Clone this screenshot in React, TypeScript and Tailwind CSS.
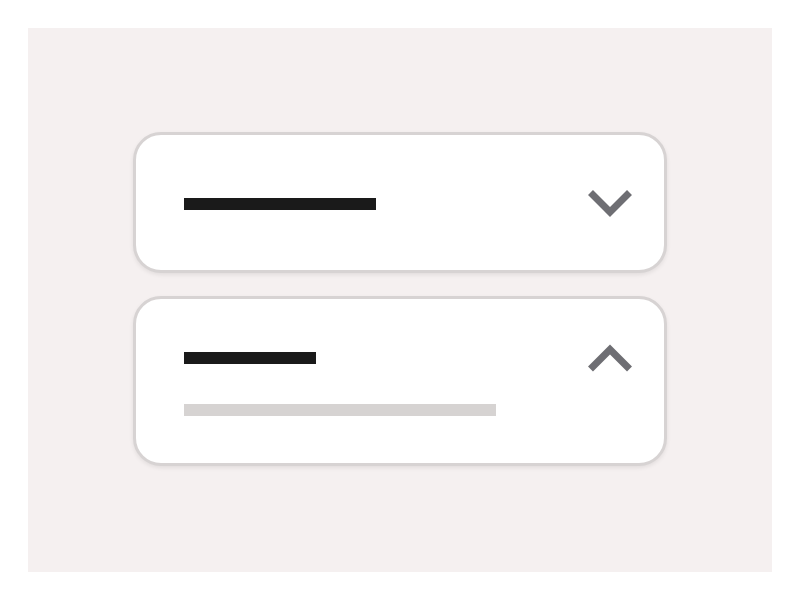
import React from "react";

type ChevronProps = {
  up?: boolean;
};

const Chevron = ({ up }: ChevronProps) => (
  <svg width="44" height="28" viewBox="0 0 44 28" className="shrink-0">
    <polyline
      points={up ? "2.5,25 22,5.5 41.5,25" : "2.5,2.5 22,22 41.5,2.5"}
      fill="none"
      stroke="#6e6e73"
      strokeWidth="7"
      strokeLinecap="butt"
      strokeLinejoin="miter"
    />
  </svg>
);

const cardClass =
  "w-[534px] rounded-[28px] border-[3px] border-[#d7d3d3] bg-white pl-[48px] pr-[32px] shadow-[0_2px_4px_rgba(0,0,0,0.08)]";

export default function App() {
  return (
    <div className="h-[600px] w-[800px] bg-white p-[28px]">
      <div className="flex h-full w-full flex-col items-center justify-center gap-[23px] bg-[#f5f0f0] pb-[2px]">
        {/* collapsed item */}
        <div className={`${cardClass} pt-[55px] pb-[52px]`}>
          <div className="flex h-[28px] items-center justify-between">
            <div className="h-[12px] w-[192px] bg-[#1a1a1a]" />
            <Chevron />
          </div>
        </div>

        {/* expanded item */}
        <div className={`${cardClass} pt-[45px] pb-[47px]`}>
          <div className="flex h-[28px] items-center justify-between">
            <div className="h-[12px] w-[132px] bg-[#1a1a1a]" />
            <Chevron up />
          </div>
          <div className="mt-[32px] h-[12px] w-[312px] bg-[#d6d3d2]" />
        </div>
      </div>
    </div>
  );
}
